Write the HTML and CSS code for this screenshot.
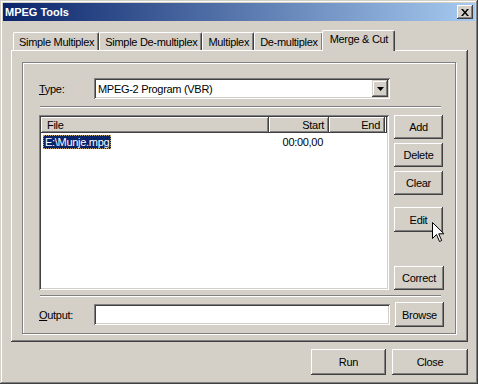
FILE: index.html
```html
<!DOCTYPE html>
<html lang="en">
<head>
    <meta charset="UTF-8">
    <title>MPEG Tools</title>
    <link rel="stylesheet" href="styles.css">
</head>
<body>
    <div class="window">
        <div class="titlebar">
            <span class="title">MPEG Tools</span>
            <button class="close" aria-label="Close">
                <svg width="8" height="7" viewBox="0 0 8 7"><path d="M0 0h2l2 2.5L6 0h2L5 3.5 8 7H6L4 4.5 2 7H0l3-3.5z" fill="#000"/></svg>
            </button>
        </div>
        <div class="body">
            <div class="tabs">
                <div class="tab">Simple Multiplex</div>
                <div class="tab">Simple De-multiplex</div>
                <div class="tab">Multiplex</div>
                <div class="tab">De-multiplex</div>
                <div class="tab active">Merge &amp; Cut</div>
            </div>
            <div class="panel">
                <div class="group">
                    <div class="field-row">
                        <label class="field-label"><u>T</u>ype:</label>
                        <div class="combo">
                            <span class="combo-text">MPEG-2 Program (VBR)</span>
                            <span class="drop"><svg width="7" height="4" viewBox="0 0 7 4"><path d="M0 0h7L3.5 4z" fill="#000"/></svg></span>
                        </div>
                    </div>
                    <div class="sep"></div>
                    <div class="list-row">
                        <div class="listview">
                            <div class="lv-head">
                                <div class="hcol col-file">File</div>
                                <div class="hcol col-start">Start</div>
                                <div class="hcol col-end">End</div>
                                <div class="hcol col-fill"></div>
                            </div>
                            <div class="lv-item">
                                <div class="cell col-file"><span class="selected">E:\Munje.mpg</span></div>
                                <div class="cell col-start">00:00,00</div>
                                <div class="cell col-end"></div>
                            </div>
                        </div>
                        <div class="side-buttons">
                            <button class="btn">Add</button>
                            <button class="btn">Delete</button>
                            <button class="btn">Clear</button>
                            <button class="btn btn-edit">Edit</button>
                            <button class="btn btn-correct">Correct</button>
                        </div>
                    </div>
                    <div class="sep sep-low"></div>
                    <div class="field-row output-row">
                        <label class="field-label"><u>O</u>utput:</label>
                        <div class="textbox"></div>
                        <button class="btn btn-browse">Browse</button>
                    </div>
                </div>
            </div>
            <div class="footer">
                <button class="btn btn-run">Run</button>
                <button class="btn btn-close">Close</button>
            </div>
        </div>
        <!-- mouse pointer over the Edit button -->
        <svg class="cursor" width="13" height="21" viewBox="0 0 13 21">
            <path d="M0.5 0.5v16l4-4 3 7 2.2-1-3-6.7h5.3z" fill="#fff" stroke="#000" stroke-width="1"/>
        </svg>
    </div>
</body>
</html>
```

FILE: styles.css
```css
* {
    box-sizing: border-box;
}
body {
    margin: 0;
    padding: 0;
    background: #d4d0c8;
    font-family: "Liberation Sans", Arial, sans-serif;
    font-size: 11px;
    letter-spacing: -0.3px;
    color: #000;
}
button {
    font-family: inherit;
    font-size: 11px;
    letter-spacing: inherit;
    color: #000;
    margin: 0;
    padding: 0;
    border: none;
    background: #d4d0c8;
}
.window {
    position: relative;
    width: 478px;
    height: 384px;
    padding: 3px;
    background: #d4d0c8;
    box-shadow: inset -1px -1px #404040, inset 1px 1px #d4d0c8, inset -2px -2px #808080, inset 2px 2px #fff;
}
.titlebar {
    height: 18px;
    display: flex;
    align-items: center;
    justify-content: space-between;
    padding: 0 2px 0 2px;
    background: linear-gradient(to right, #0a246a, #a6caf0);
}
.title {
    color: #fff;
    font-weight: bold;
    font-size: 11px;
    letter-spacing: normal;
}
.close {
    width: 16px;
    height: 14px;
    display: flex;
    align-items: center;
    justify-content: center;
    box-shadow: inset -1px -1px #404040, inset 1px 1px #fff, inset -2px -2px #808080;
}
.body {
    padding: 9px 7px 0 8px;
}
.tabs {
    display: flex;
    align-items: flex-end;
    height: 20px;
    padding-left: 2px;
}
.tab {
    position: relative;
    height: 18px;
    padding: 3px 4px 0 5px;
    border-top: 1px solid #fff;
    border-left: 1px solid #fff;
    border-right: 1px solid #404040;
    border-radius: 2px 2px 0 0;
    box-shadow: inset -1px 0 #808080;
    white-space: nowrap;
}
.tab.active {
    height: 21px;
    margin: 0 -2px -1px -1px;
    padding: 2px 6px 0 7px;
    z-index: 1;
    background: #d4d0c8;
}
.panel {
    padding: 12px 12px 8px 11px;
    box-shadow: inset -1px -1px #404040, inset 1px 1px #fff, inset -2px -2px #808080;
}
.group {
    padding: 15px 11px 6px 16px;
    border: 1px solid #808080;
    box-shadow: inset 1px 1px #fff, 1px 1px #fff;
}
.field-row {
    display: flex;
    align-items: center;
}
.field-label {
    width: 55px;
}
.combo, .textbox {
    width: 296px;
    height: 21px;
    background: #fff;
    box-shadow: inset 1px 1px #808080, inset -1px -1px #fff, inset 2px 2px #404040, inset -2px -2px #d4d0c8;
}
.combo {
    display: flex;
    align-items: center;
    justify-content: space-between;
    padding: 0 2px 0 4px;
}
.drop {
    width: 16px;
    height: 17px;
    display: flex;
    align-items: center;
    justify-content: center;
    background: #d4d0c8;
    box-shadow: inset -1px -1px #404040, inset 1px 1px #d4d0c8, inset -2px -2px #808080, inset 2px 2px #fff;
}
.sep {
    height: 2px;
    margin: 7px 3px 7px 1px;
    border-top: 1px solid #808080;
    border-bottom: 1px solid #fff;
}
.sep-low {
    margin: 5px 3px 5px 1px;
}
.list-row {
    display: flex;
    gap: 5px;
}
.listview {
    width: 351px;
    height: 175px;
    padding: 2px;
    background: #fff;
    box-shadow: inset 1px 1px #808080, inset -1px -1px #fff, inset 2px 2px #404040, inset -2px -2px #d4d0c8;
}
.lv-head {
    display: flex;
    height: 16px;
    background: #d4d0c8;
}
.hcol {
    height: 16px;
    padding: 2px 5px 0 6px;
    box-shadow: inset -1px -1px #404040, inset 1px 1px #fff, inset -2px -2px #808080;
}
.col-file {
    width: 228px;
}
.col-start {
    width: 60px;
    text-align: right;
}
.col-end {
    width: 56px;
    text-align: right;
}
.col-fill {
    flex: 1;
    padding: 0;
}
.lv-item {
    display: flex;
    padding-top: 2px;
    line-height: 14px;
}
.cell {
    padding: 0 6px 0 2px;
}
.cell.col-start {
    padding-right: 6px;
}
.selected {
    display: inline-block;
    padding: 0 2px;
    background: #0a246a;
    color: #fff;
    outline: 1px dotted #c0a060;
    outline-offset: -1px;
}
.side-buttons {
    display: flex;
    flex-direction: column;
    gap: 4px;
}
.btn {
    width: 49px;
    height: 24px;
    box-shadow: inset -1px -1px #404040, inset 1px 1px #fff, inset -2px -2px #808080;
}
.btn-edit {
    margin-top: 8px;
    height: 25px;
}
.btn-correct {
    margin-top: auto;
    width: 50px;
}
.output-row .textbox {
    margin-right: 5px;
}
.btn-browse {
    height: 25px;
}
.footer {
    display: flex;
    justify-content: flex-end;
    gap: 6px;
    margin-top: 7px;
}
.btn-run {
    width: 75px;
    height: 26px;
}
.btn-close {
    width: 76px;
    height: 26px;
}
.cursor {
    position: absolute;
    left: 432px;
    top: 222px;
}
```
